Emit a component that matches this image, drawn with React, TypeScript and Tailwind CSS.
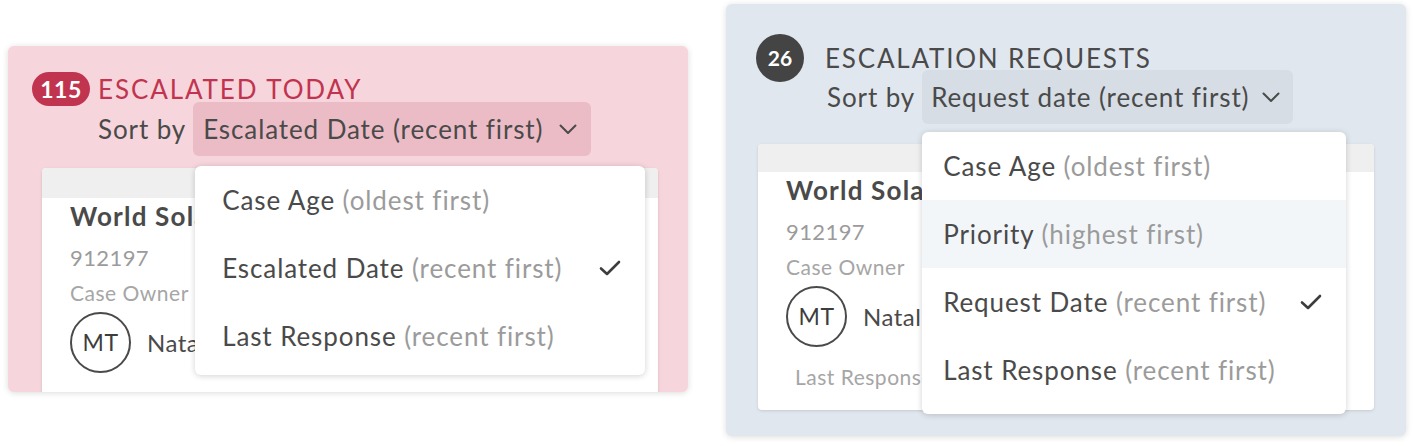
import React from "react";

const font = { fontFamily: "Lato, 'Open Sans', sans-serif" };

function Chevron() {
  return (
    <svg width="18" height="11" viewBox="0 0 18 11" className="shrink-0">
      <polyline points="1.5,1.5 9,9 16.5,1.5" fill="none" stroke="#4a4a4a" strokeWidth="2" strokeLinecap="round" strokeLinejoin="round" />
    </svg>
  );
}

function Check() {
  return (
    <svg width="22" height="18" viewBox="0 0 22 18" className="shrink-0">
      <polyline points="2,9.5 8,15 20,3" fill="none" stroke="#3d3d3d" strokeWidth="2.6" strokeLinecap="round" strokeLinejoin="round" />
    </svg>
  );
}

type Opt = { main: string; sub: string; checked?: boolean; hover?: boolean };

function Menu({ options, className, padX }: { options: Opt[]; className: string; padX: string }) {
  return (
    <div className={`absolute z-10 rounded-md bg-white shadow-[0_1px_6px_rgba(0,0,0,0.18)] overflow-hidden ${className}`}>
      {options.map((o) => (
        <div
          key={o.main}
          className={`flex h-[68px] items-center justify-between ${padX} ${o.hover ? "bg-[#f3f6f9]" : ""}`}
        >
          <span className="text-[26px] tracking-[0.9px] text-[#4a4a4a] whitespace-nowrap">
            {o.main} <span className="text-[#9b9b9b]">{o.sub}</span>
          </span>
          {o.checked ? <Check /> : null}
        </div>
      ))}
    </div>
  );
}

function Card({ stripH, showLast }: { stripH: string; showLast?: boolean }) {
  return (
    <div className="w-[616px] h-[266px] shrink-0 rounded-[4px] bg-white shadow-[0_1px_3px_rgba(0,0,0,0.12)] overflow-hidden">
      <div className={`${stripH} bg-[#efefef]`} />
      <div className="flex flex-col px-7 pt-[2px]">
        <div className="h-[32px] leading-[32px] text-[26px] tracking-[1.2px] font-bold text-[#4a4a4a] whitespace-nowrap">World Solar</div>
        <div className="mt-[12px] h-[28px] leading-[28px] text-[22px] tracking-[0.4px] text-[#9b9b9b]">912197</div>
        <div className="mt-[9px] h-[24px] leading-[24px] text-[21px] tracking-[0.5px] text-[#a6a6a6]">Case Owner</div>
        <div className="mt-[7px] flex items-center gap-4">
          <div className="flex h-[61px] w-[61px] items-center justify-center rounded-full border-2 border-[#4a4a4a] text-[23px] tracking-[0.5px] text-[#3d3d3d]">
            MT
          </div>
          <span className="text-[24px] tracking-[0.5px] text-[#4a4a4a]">Natalie</span>
        </div>
        {showLast ? (
          <div className="mt-[18px] ml-[9px] h-[24px] leading-[24px] text-[21px] tracking-[0.5px] text-[#a6a6a6] whitespace-nowrap">Last Response</div>
        ) : null}
      </div>
    </div>
  );
}

export default function App() {
  return (
    <div className="flex h-[446px] w-[1414px] items-start bg-white" style={font}>
      {/* Left panel */}
      <div className="ml-2 mt-[46px] flex h-[346px] w-[680px] shrink-0 flex-col overflow-hidden rounded-md bg-[#f6d5dc] pl-6 pt-[28px] shadow-[0_1px_6px_rgba(0,0,0,0.14)]">
        <div className="flex h-[30px] items-center gap-2">
          <span className="flex h-[34px] w-[58px] shrink-0 items-center justify-center rounded-full bg-[#c1344f] text-[23px] font-bold tracking-[0.5px] text-white">
            115
          </span>
          <span className="text-[26px] tracking-[1.9px] text-[#c1344f] whitespace-nowrap">ESCALATED TODAY</span>
        </div>
        <div className="ml-[66px] mt-[-2px] flex items-center gap-[7px]">
          <span className="text-[26px] tracking-[0.9px] text-[#4a4a4a] whitespace-nowrap">Sort by</span>
          <div className="relative">
            <div className="flex h-[54px] w-[398px] items-center justify-between rounded-md bg-[#ecbcc6] pl-[10px] pr-[14px]">
              <span className="text-[26px] tracking-[0.9px] text-[#4a4a4a] whitespace-nowrap">Escalated Date (recent first)</span>
              <Chevron />
            </div>
            <Menu
              className="left-[2px] top-[64px] w-[450px] pb-[5px]"
              padX="pl-[27px] pr-[24px]"
              options={[
                { main: "Case Age", sub: "(oldest first)" },
                { main: "Escalated Date", sub: "(recent first)", checked: true },
                { main: "Last Response", sub: "(recent first)" },
              ]}
            />
          </div>
        </div>
        <div className="ml-[10px] mt-[12px]">
          <Card stripH="h-[30px]" />
        </div>
      </div>

      {/* Right panel */}
      <div className="ml-[38px] mt-[4px] flex h-[432px] w-[680px] shrink-0 flex-col overflow-hidden rounded-md bg-[#e1e7ee] pl-[30px] pt-[39px] shadow-[0_1px_6px_rgba(0,0,0,0.14)]">
        <div className="flex h-[30px] items-center gap-[21px]">
          <span className="flex h-[48px] w-[48px] shrink-0 items-center justify-center rounded-full bg-[#444444] text-[21px] font-bold text-white">
            26
          </span>
          <span className="text-[26px] tracking-[1.8px] text-[#4a4a4a] whitespace-nowrap">ESCALATION REQUESTS</span>
        </div>
        <div className="ml-[71px] mt-[-3px] flex items-center gap-[7px]">
          <span className="text-[26px] tracking-[0.9px] text-[#4a4a4a] whitespace-nowrap">Sort by</span>
          <div className="relative">
            <div className="flex h-[54px] w-[371px] items-center justify-between rounded-md bg-[#d6dde5] pl-[9px] pr-[13px]">
              <span className="text-[26px] tracking-[0.9px] text-[#4a4a4a] whitespace-nowrap">Request date (recent first)</span>
              <Chevron />
            </div>
            <Menu
              className="left-0 top-[62px] w-[424px] pb-[10px]"
              padX="pl-[21px] pr-[24px]"
              options={[
                { main: "Case Age", sub: "(oldest first)" },
                { main: "Priority", sub: "(highest first)", hover: true },
                { main: "Request Date", sub: "(recent first)", checked: true },
                { main: "Last Response", sub: "(recent first)" },
              ]}
            />
          </div>
        </div>
        <div className="ml-[2px] mt-[20px]">
          <Card stripH="h-[28px]" showLast />
        </div>
      </div>
    </div>
  );
}
